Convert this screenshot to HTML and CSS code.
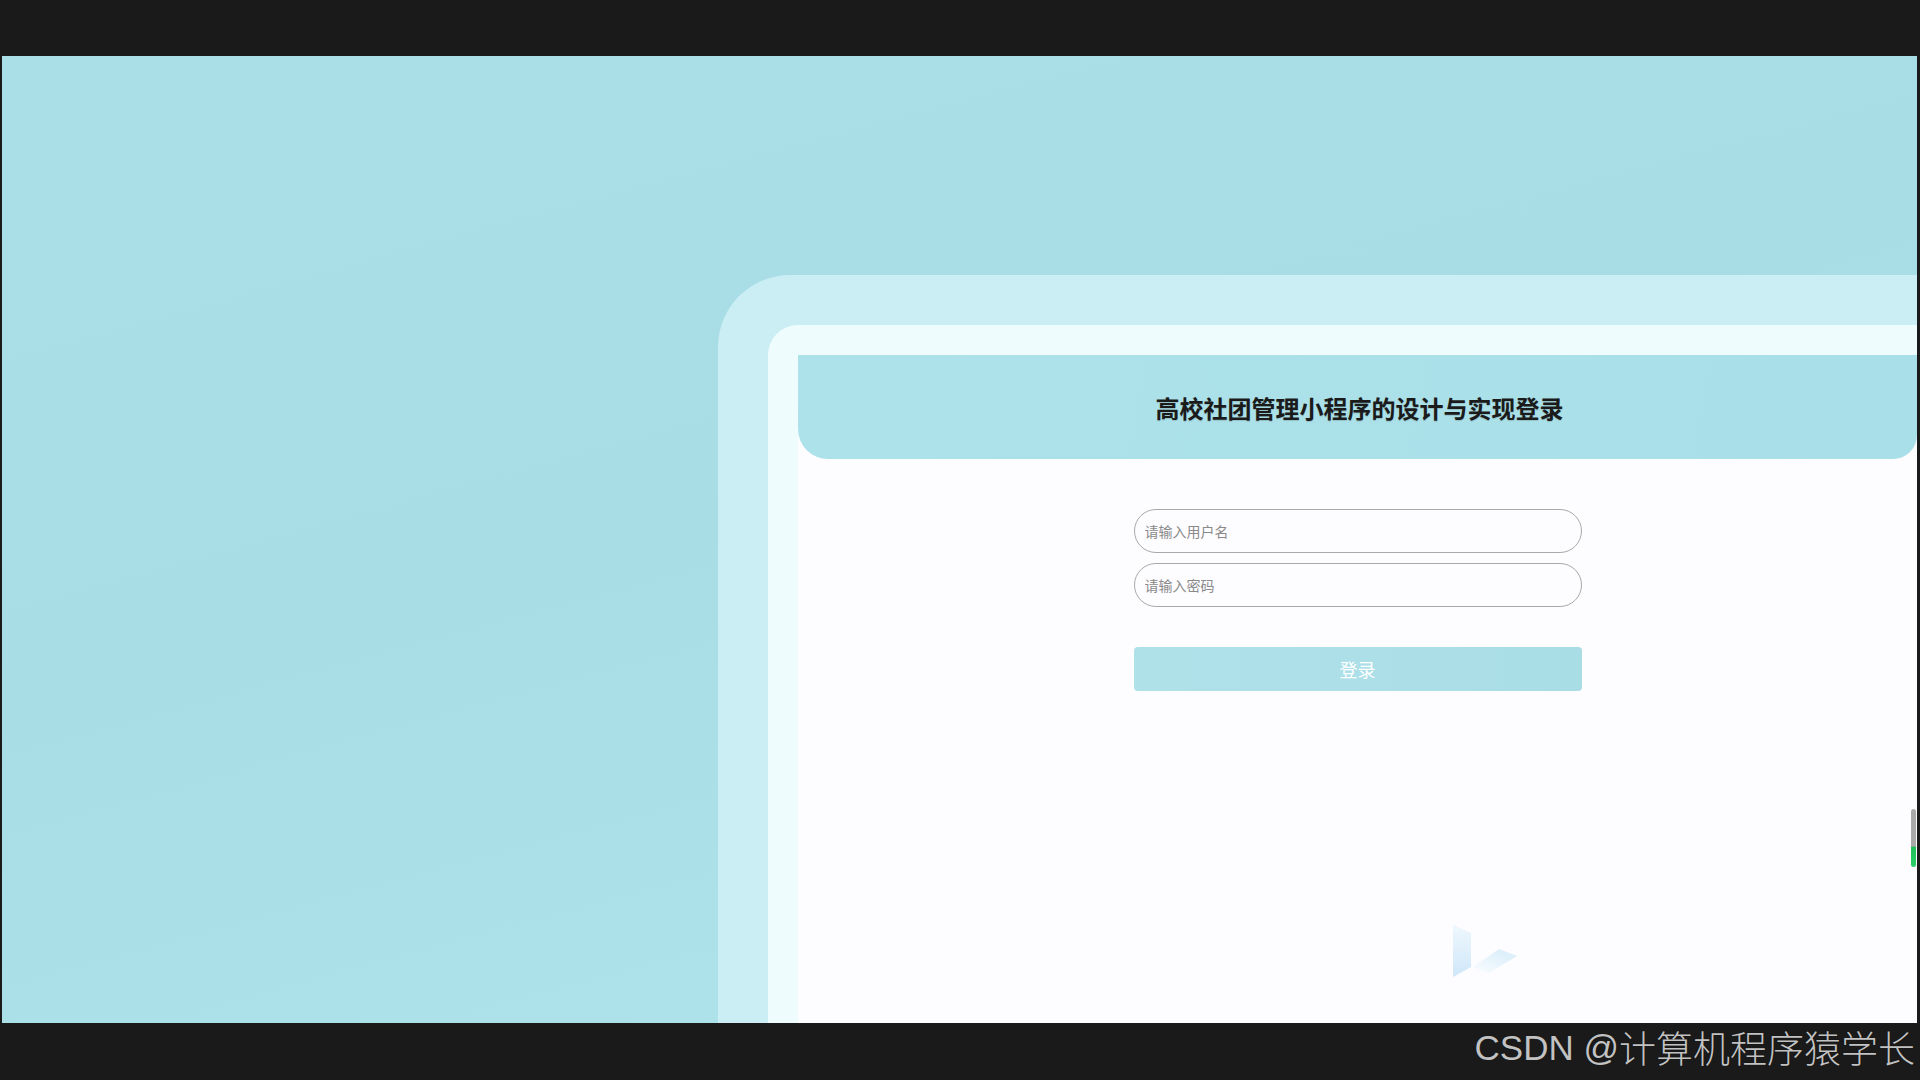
FILE: index.html
```html
<!DOCTYPE html>
<html lang="zh-CN">
<head>
  <meta charset="UTF-8">
  <meta name="viewport" content="width=device-width, initial-scale=1.0">
  <title>高校社团管理小程序的设计与实现登录</title>
  <link rel="stylesheet" href="styles.css">
</head>
<body>
  <div class="player">
    <div class="top-bar"></div>

    <!-- Screen area -->
    <div class="stage">
      <div class="frame">
        <div class="frame-inner">
          <div class="panel">
            <div class="header">
              <h2 class="title">高校社团管理小程序的设计与实现登录</h2>
            </div>

            <form class="login-form" onsubmit="return false">
              <input class="field" type="text" placeholder="请输入用户名">
              <input class="field" type="password" placeholder="请输入密码">
              <button class="login-btn" type="submit">登录</button>
            </form>

            <svg class="mark" width="66" height="56" viewBox="0 0 66 56">
              <defs>
                <linearGradient id="barGrad" x1="0" y1="0" x2="0" y2="1">
                  <stop offset="0" stop-color="#eef7fd"/>
                  <stop offset="1" stop-color="#cfe7f9"/>
                </linearGradient>
                <linearGradient id="triGrad" x1="0" y1="1" x2="1" y2="0">
                  <stop offset="0" stop-color="#fbfdff"/>
                  <stop offset="1" stop-color="#d4ebf9"/>
                </linearGradient>
              </defs>
              <polygon points="0,2 18,10 18,44 0,54" fill="url(#barGrad)"/>
              <polygon points="20,44 46,26 64,33 36,50" fill="url(#triGrad)"/>
            </svg>
          </div>
        </div>
      </div>
      <div class="scroll-thumb"></div>
    </div>

    <div class="bottom-bar">
      <span class="wm-latin">CSDN @</span><span class="wm-cjk">计算机程序猿学长</span>
    </div>
  </div>
</body>
</html>
```

FILE: styles.css
```css
/* General Styles */
html, body {
  margin: 0;
  padding: 0;
  height: 100%;
  background-color: #1a1a1a;
  font-family: "Noto Sans CJK SC", "Liberation Sans", sans-serif;
  overflow: hidden;
}

.player {
  display: flex;
  flex-direction: column;
  height: 1080px;
}

.top-bar {
  height: 56px;
  flex-shrink: 0;
}

/* Screen area */
.stage {
  position: relative;
  height: 967px;
  flex-shrink: 0;
  margin: 0 3px 0 2px;
  display: flex;
  padding: 219px 0 0 716px;
  box-sizing: border-box;
  background: linear-gradient(165deg, #abdfe8 0%, #a8dde6 45%, #b2e5ee 100%);
}

.frame {
  flex: 1;
  display: flex;
  background-color: #cbeef5;
  border-radius: 72px 0 0 0;
  padding: 50px 0 0 50px;
}

.frame-inner {
  flex: 1;
  display: flex;
  background-color: #effcfe;
  border-radius: 30px 0 0 0;
  padding: 30px 0 0 30px;
}

.panel {
  position: relative;
  flex: 1;
  display: flex;
  flex-direction: column;
  background-color: #fdfcff;
}

.header {
  height: 104px;
  display: flex;
  align-items: center;
  justify-content: center;
  background: linear-gradient(100deg, #ade2ea, #a9dfe8);
  border-radius: 0 0 24px 30px;
}

.title {
  margin: 0 0 0 4px;
  font-size: 24px;
  font-weight: bold;
  color: #1b1b1b;
  text-shadow: 0 1px 1px rgba(0, 0, 0, 0.15);
}

/* Login form */
.login-form {
  width: 448px;
  margin: 50px auto 0;
  display: flex;
  flex-direction: column;
  gap: 10px;
}

.field {
  height: 44px;
  box-sizing: border-box;
  border: 1px solid #a9a9a9;
  border-radius: 22px;
  padding: 0 10px;
  background-color: #fdfcff;
  font-family: "Noto Sans CJK SC", sans-serif;
  font-size: 14px;
  color: #333;
  outline: none;
}

.field::placeholder {
  color: #8a8a8a;
}

.login-btn {
  height: 44px;
  margin-top: 30px;
  border: none;
  border-radius: 4px;
  background: linear-gradient(90deg, #afe1e9, #a9dde6);
  color: #fff;
  font-family: "Noto Sans CJK SC", sans-serif;
  font-size: 18px;
  cursor: pointer;
}

.mark {
  position: absolute;
  left: 655px;
  top: 568px;
}

.scroll-thumb {
  position: absolute;
  right: 1px;
  top: 753px;
  width: 5px;
  height: 58px;
  border-radius: 3px;
  background: linear-gradient(#a9a9a9 0%, #a9a9a9 64%, #1fbf5a 66%, #2dd06a 100%);
}

/* Watermark bar */
.bottom-bar {
  flex: 1;
  display: flex;
  justify-content: flex-end;
  align-items: center;
  padding: 0 5px 8px 0;
  color: #c2c2c2;
  line-height: 1;
  text-shadow: 0 0 1px rgba(0, 0, 0, 0.6);
}

.wm-latin {
  font-family: "Liberation Sans", sans-serif;
  font-size: 35px;
}

.wm-cjk {
  font-family: "Noto Sans CJK SC", sans-serif;
  font-size: 37px;
  font-weight: 300;
}
```
